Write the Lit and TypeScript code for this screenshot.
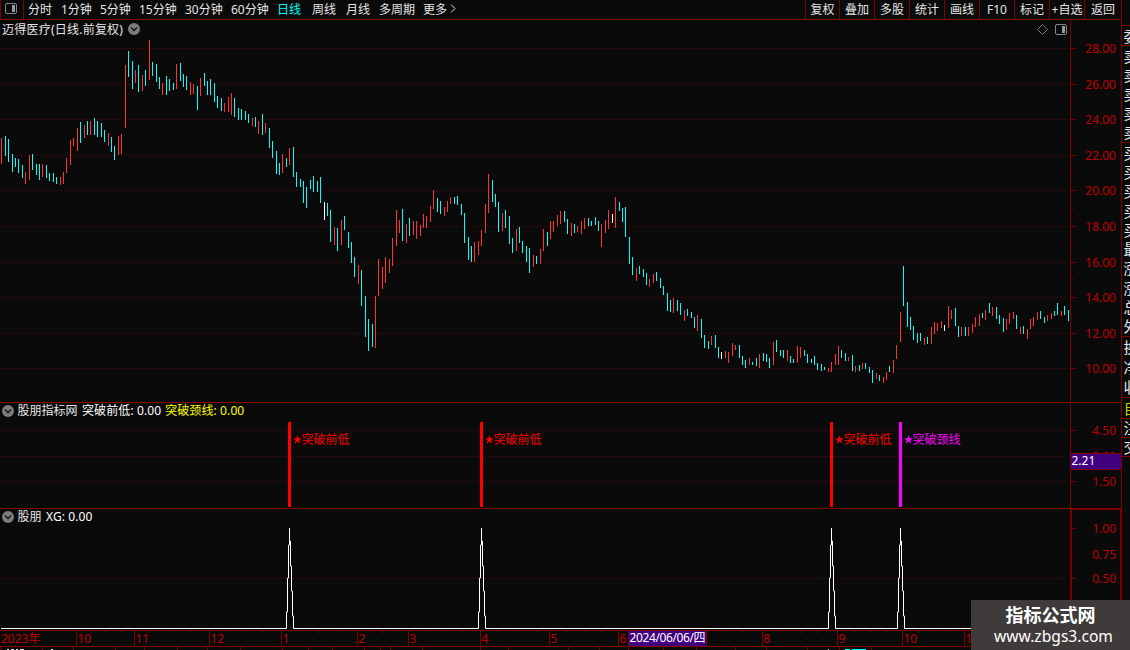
import { LitElement, html, svg, css } from 'lit';
import { customElement } from 'lit/decorators.js';
import { classMap } from 'lit/directives/class-map.js';

// x, high, low, kind (r = rising, c = falling, w = unchanged)
const BARS = `
1 138 164 r,5 136 156 c,8 139 162 c,12 154 172 c,15 158 167 c,18 159 173 c,22 165 178 c,25 172 184 r
29 155 180 r,32 154 170 c,36 164 175 c,39 164 180 c,42 164 177 r,46 165 178 c,49 173 181 c,53 173 182 c
56 177 184 c,60 177 185 r,63 172 184 r,66 158 173 r,70 140 165 r,73 138 146 r,77 128 151 r,80 122 143 c
84 125 138 r,87 121 135 c,90 121 135 r,94 118 135 c,97 121 137 c,101 123 137 c,104 130 142 c,108 133 146 r
111 137 152 c,114 146 160 c,118 136 155 r,121 134 154 r,125 65 128 r,128 51 77 c,132 61 89 c,135 70 83 r
138 65 92 c,142 75 91 r,145 70 86 c,149 40 80 r,152 62 76 c,156 64 82 c,159 77 89 c,162 83 95 r
166 76 95 c,169 79 91 c,173 83 90 c,176 64 89 r,180 63 81 c,183 74 87 c,186 76 90 c,190 82 95 r
193 84 94 r,197 86 110 c,200 78 96 r,204 73 86 c,207 81 95 c,210 79 95 c,214 83 102 c,217 96 108 c
221 98 111 c,224 103 112 r,228 97 112 r,231 93 115 r,234 98 117 c,238 108 120 c,241 109 120 c,245 111 120 c
248 114 123 c,252 118 126 r,255 117 127 c,258 121 134 r,262 114 135 c,265 123 133 r,269 128 148 c,272 141 158 c
276 151 174 c,279 163 175 c,282 154 173 r,286 158 167 c,289 148 165 r,293 147 177 c,296 172 187 c,300 179 187 c
303 181 203 c,306 187 208 c,310 180 189 c,313 176 192 c,317 181 192 c,320 177 203 c,324 202 220 w,327 203 216 c
330 210 242 c,334 227 245 r,337 228 251 c,341 220 245 r,344 216 230 c,348 232 248 c,351 242 263 c,354 257 277 c
358 265 284 r,361 270 306 c,365 296 337 c,368 319 351 c,372 324 347 c,375 296 348 r,378 259 296 r,382 267 289 r
385 257 283 r,389 259 273 r,392 238 266 r,396 210 246 r,399 220 233 r,402 209 241 c,406 224 243 r,409 218 236 c
413 221 235 r,416 221 239 r,420 225 236 r,423 214 228 r,426 216 228 r,430 206 222 r,433 190 209 r,437 198 212 c
440 201 214 c,444 207 216 r,447 201 212 r,450 197 204 r,454 197 204 c,457 196 205 c,461 204 215 c,464 213 243 c
468 237 260 c,471 246 262 c,474 242 262 r,478 241 255 r,481 230 246 r,485 204 233 r,488 174 213 r,492 180 202 c
495 194 207 c,498 202 232 c,502 213 231 r,505 210 228 c,509 216 244 c,512 238 253 c,516 229 251 r,519 227 243 c
522 241 253 c,526 246 262 c,529 248 273 c,533 255 267 r,536 256 264 c,540 249 264 r,543 229 251 r,547 232 246 c
550 221 239 r,553 221 232 r,557 215 226 r,560 211 224 r,564 211 222 c,567 219 234 c,571 223 236 r,574 224 233 c
577 226 232 r,581 221 234 r,584 218 229 r,588 218 226 c,591 221 226 c,595 217 225 c,598 221 231 c,601 224 247 r
605 220 233 r,608 210 229 r,612 214 223 w,615 197 228 r,619 202 211 c,622 208 222 c,625 207 237 c,629 237 264 c
632 257 275 c,636 268 281 r,639 266 274 c,643 269 277 c,646 273 285 c,649 279 287 r,653 274 283 r,656 272 281 c
660 278 288 c,663 286 295 c,667 293 311 c,670 300 312 c,673 298 313 r,677 300 311 c,680 303 315 c,684 310 321 r
687 309 316 c,691 312 318 c,694 317 328 c,697 315 331 r,701 319 338 c,704 335 348 c,708 341 349 c,711 336 345 r
715 335 348 c,718 347 358 c,721 352 359 w,725 351 358 r,728 352 363 r,732 343 356 r,735 345 350 r,739 345 358 c
742 356 365 c,745 360 368 c,749 358 365 r,752 362 365 c,756 358 366 c,759 354 368 r,763 353 361 c,766 354 362 c
769 358 368 c,773 342 365 r,776 340 352 c,780 350 356 c,783 350 358 c,787 350 361 r,790 356 363 c,793 359 363 c
797 346 363 r,800 347 358 r,804 350 356 c,807 354 363 c,811 359 363 c,814 356 365 c,817 363 370 c,821 364 371 c
824 367 370 c,828 368 372 r,831 362 372 r,835 354 365 r,838 346 365 r,841 350 358 c,845 353 361 c,848 357 361 r
852 355 371 c,855 366 372 r,859 365 371 c,862 363 369 r,865 363 369 c,869 367 373 c,872 370 383 c,876 373 379 r
879 375 381 c,883 377 383 r,886 372 380 r,889 366 372 c,893 360 373 r,896 345 359 r,900 312 342 r,903 266 306 c
907 302 327 c,910 317 330 c,913 326 340 c,917 333 343 c,920 333 341 c,924 338 345 r,927 337 344 c,931 327 344 r
934 322 334 r,937 323 331 r,941 321 328 r,944 325 331 w,948 306 328 r,951 310 319 r,955 308 326 c,958 326 337 c
961 327 336 r,965 327 336 c,968 327 336 r,972 324 333 r,975 317 327 r,979 314 326 r,982 313 318 c,985 310 320 r
989 303 313 c,992 307 316 r,996 307 319 c,999 315 324 c,1003 318 332 c,1006 319 330 r,1009 313 324 r,1013 312 319 r
1016 315 329 c,1020 327 334 r,1023 326 334 c,1027 329 339 r,1030 319 329 r,1033 317 326 r,1037 312 320 r,1040 311 319 c
1044 317 323 c,1047 315 321 r,1051 313 319 r,1054 311 316 c,1057 303 315 c,1061 311 316 r,1064 306 315 c,1068 310 321 c`;

interface Bar {
  x: number;
  high: number;
  low: number;
  kind: string;
}

const bars: Bar[] = BARS.trim()
  .split(/[\n,]/)
  .map((row) => {
    const [x, high, low, kind] = row.split(' ');
    return { x: +x, high: +high, low: +low, kind };
  });

const PERIODS = ['分时', '1分钟', '5分钟', '15分钟', '30分钟', '60分钟', '日线', '周线', '月线', '多周期', '更多'];
const TOOLS = ['复权', '叠加', '多股', '统计', '画线', 'F10', '标记', '+自选', '返回'];

const PRICES: [string, number][] = [
  ['28.00', 48], ['26.00', 84], ['24.00', 119], ['22.00', 155], ['20.00', 190],
  ['18.00', 226], ['16.00', 262], ['14.00', 297], ['12.00', 333], ['10.00', 368],
];

const SIGNALS = [
  { x: 289, label: '突破前低', kind: 'low' },
  { x: 481, label: '突破前低', kind: 'low' },
  { x: 831, label: '突破前低', kind: 'low' },
  { x: 900, label: '突破颈线', kind: 'neck' },
];

const MONTHS: [string, number][] = [
  ['10', 76], ['11', 134], ['12', 209], ['1', 281], ['2', 357], ['3', 408], ['4', 480],
  ['5', 549], ['6', 618], ['8', 762], ['9', 837], ['10', 902], ['11', 964],
];
const WEEKS = [
  91, 105, 120, 149, 172, 190, 227, 244, 263, 300, 319, 338, 370, 382, 395, 426, 444, 462, 497, 515,
  536, 566, 584, 601, 723, 742, 781, 800, 816, 854, 870, 886, 918, 933, 949,
];
const FOOT_TICKS = [
  0, 42, 73, 115, 144, 177, 207, 240, 282, 308, 332, 364, 380, 390, 422, 480, 508, 568, 599, 628, 663,
  696, 735, 766, 807, 839, 871,
];

const QUOTE_GROUPS = [
  { rows: ['委'], size: 20 },
  { rows: ['卖', '卖', '卖', '卖', '卖'], size: 97 },
  { rows: ['买', '买', '买', '买', '买', '最', '涨', '涨', '总', '外'], size: 194 },
  { rows: ['换', '净', '收'], size: 61 },
  { rows: ['自'], size: 21, kind: 'own' },
  { rows: ['注'], size: 19 },
  { rows: ['交'], size: 20 },
];

const dots = (y: number) => svg`<line class="grid" x1="1" x2="1067" y1=${y + 0.5} y2=${y + 0.5}></line>`;
const tick = (y: number, len: number) => svg`<rect class="rule" x="1071" y=${y} width=${len} height="1"></rect>`;
const scale = (text: string, y: number) => svg`
  <text class="scale" x="1116" y=${y + 5} text-anchor="end">${text}</text>`;

@customElement('round-toggle')
export class RoundToggle extends LitElement {
  static styles = css`
    :host {
      display: block;
      width: 12px;
      height: 12px;
    }
    svg {
      display: block;
    }
  `;

  render() {
    return html`
      <svg width="12" height="12" viewBox="0 0 12 12">
        <circle cx="6" cy="6" r="6" fill="#7c7c7c"></circle>
        <path d="M3 4.5 6 7.5 9 4.5" fill="none" stroke="#111" stroke-width="1.3"></path>
      </svg>
    `;
  }
}

@customElement('dock-icon')
export class DockIcon extends LitElement {
  static styles = css`
    :host {
      display: block;
      width: 12px;
      height: 12px;
    }
    svg {
      display: block;
    }
  `;

  render() {
    return html`
      <svg width="12" height="12" viewBox="0 0 12 12">
        <rect x="0.5" y="0.5" width="11" height="10" rx="1.5" fill="none" stroke="#858585"></rect>
        <rect x="7" y="2" width="3" height="7" fill="#999"></rect>
      </svg>
    `;
  }
}

@customElement('app-root')
export class AppRoot extends LitElement {
  static styles = css`
    :host {
      display: flex;
      position: relative;
      width: 1130px;
      height: 650px;
      overflow: hidden;
      background: #0a0a0a;
      color: #e6e6e6;
      font: 12px/14px 'Noto Sans', 'Noto Sans CJK SC', sans-serif;
      white-space: nowrap;
    }
    svg {
      display: block;
    }
    .main {
      display: flex;
      flex-direction: column;
      width: 1121px;
      flex: none;
    }
    .toolbar {
      display: flex;
      height: 19px;
      border-bottom: 1px solid #800000;
      line-height: 19px;
    }
    .dock {
      box-sizing: border-box;
      width: 24px;
      padding: 3px 0 0 4px;
      border: solid #800000;
      border-width: 0 1px;
    }
    .dock dock-icon {
      width: 12px;
    }
    .periods {
      display: grid;
      grid-template-columns: 33px 39px 39px 46px 46px 46px 35px 34px 33px 44px 27px 8px;
      padding-left: 4px;
    }
    .active {
      color: #00ffff;
    }
    .more {
      padding-top: 4px;
    }
    .tools {
      display: grid;
      grid-template-columns: 34px repeat(7, 35px) 37px;
      margin-left: auto;
    }
    .tools span {
      border-left: 1px solid #800000;
      text-align: center;
    }
    .panel {
      display: grid;
    }
    .panel > * {
      grid-area: 1 / 1;
    }
    .title {
      display: flex;
      align-items: flex-start;
      z-index: 1;
    }
    .title round-toggle {
      margin: 1px 3.5px 0 2px;
    }
    .title .name {
      margin-right: 4.5px;
    }
    .title .value {
      color: #fff;
      margin-right: 4px;
      letter-spacing: 0.1px;
    }
    .title .value.neck {
      color: #ffff00;
    }
    .price .title {
      padding: 3px 54px 0 2px;
    }
    .price .title .stock {
      letter-spacing: 0.23px;
    }
    .price .title round-toggle {
      margin: 0 auto 0 5px;
    }
    .price .title dock-icon {
      margin: 1px 0 0 7px;
    }
    .signal .title,
    .pick .title {
      padding-top: 1px;
    }
    .grid {
      stroke: #780808;
      stroke-dasharray: 1 3;
    }
    .rule {
      fill: #800000;
    }
    .scale {
      fill: #c00000;
      font-size: 12px;
    }
    .bar-r {
      fill: #ff3232;
    }
    .bar-c {
      fill: #00ffff;
    }
    .bar-w {
      fill: #fff;
    }
    .low {
      fill: #ff0000;
    }
    .neck {
      fill: #ff00ff;
    }
    .cursor {
      fill: #400080;
    }
    .cursor-text {
      fill: #fff;
    }
    .curve {
      fill: none;
      stroke: #fff;
    }
    .quotes {
      width: 8px;
      overflow: hidden;
      border-left: 1px solid #800000;
      height: 600px;
      font-size: 15px;
    }
    .quotes .group {
      box-sizing: border-box;
      display: flex;
      flex-direction: column;
      justify-content: space-around;
      border-top: 1px solid #800000;
      padding-left: 1.5px;
    }
    .quotes .group:first-child {
      margin-top: 25px;
    }
    .quotes .group:last-child {
      border-bottom: 1px solid #800000;
    }
    .quotes .own {
      color: #c8c800;
    }
    .watermark {
      position: absolute;
      right: 0;
      bottom: 0;
      width: 159px;
      height: 50px;
      background: #403b3b;
      color: #fff;
      text-align: center;
      box-sizing: border-box;
      padding-top: 5px;
    }
    .watermark .site {
      font-size: 18px;
      font-weight: bold;
      line-height: 21px;
    }
    .watermark .url {
      font-size: 15.6px;
      line-height: 20px;
      padding-left: 6px;
    }
  `;

  render() {
    return html`
      <div class="main">
        ${this.renderToolbar()} ${this.renderPrice()} ${this.renderSignal()} ${this.renderPick()}
        ${this.renderTimeline()}
      </div>
      <div class="quotes">
        ${QUOTE_GROUPS.map(
          (g) => html`
            <div class=${classMap({ group: true, own: g.kind === 'own' })} style="height:${g.size}px">
              ${g.rows.map((r) => html`<span>${r}</span>`)}
            </div>
          `
        )}
      </div>
      <div class="watermark">
        <div class="site">指标公式网</div>
        <div class="url">www.zbgs3.com</div>
      </div>
    `;
  }

  private renderToolbar() {
    return html`
      <div class="toolbar">
        <div class="dock"><dock-icon></dock-icon></div>
        <div class="periods">
          ${PERIODS.map((p) => html`<span class=${classMap({ active: p === '日线' })}>${p}</span>`)}
          <svg class="more" width="7" height="10" viewBox="0 0 7 10">
            <path d="M1 .5 5 4.5 1 8.5" fill="none" stroke="#ddd"></path>
          </svg>
        </div>
        <div class="tools">${TOOLS.map((t) => html`<span>${t}</span>`)}</div>
      </div>
    `;
  }

  private renderPrice() {
    return html`
      <div class="panel price">
        <div class="title">
          <span class="stock">迈得医疗(日线.前复权)</span>
          <round-toggle></round-toggle>
          <svg width="11" height="12" viewBox="0 0 11 12">
            <path d="M5.5 1.5 10.5 6.5 5.5 11.5 .5 6.5Z" fill="none" stroke="#777"></path>
          </svg>
          <dock-icon></dock-icon>
        </div>
        <svg width="1121" height="383" viewBox="0 20 1121 383">
          ${PRICES.map(([text, y]) => svg`${dots(y)}${tick(y, 5)}${scale(text, y)}`)}
          ${PRICES.slice(0, -1).map(([, y], i) => tick(Math.floor((y + PRICES[i + 1][1]) / 2), 2))}
          ${bars.map(
            (b) => svg`<rect class="bar-${b.kind}" x=${b.x} y=${b.high} width="1" height=${b.low - b.high}></rect>`
          )}
          <rect class="rule" x="1070" y="20" width="1" height="383"></rect>
          <rect class="rule" x="0" y="402" width="1121" height="1"></rect>
        </svg>
      </div>
    `;
  }

  private renderSignal() {
    return html`
      <div class="panel signal">
        <div class="title">
          <round-toggle></round-toggle>
          <span class="name">股朋指标网</span>
          <span class="value">突破前低: 0.00</span>
          <span class="value neck">突破颈线: 0.00</span>
        </div>
        <svg width="1121" height="106" viewBox="0 403 1121 106">
          ${[430, 456, 481].map(dots)} ${tick(430, 5)} ${tick(443, 2)} ${tick(481, 5)}
          ${scale('4.50', 430)} ${scale('3.00', 456)} ${scale('1.50', 481)}
          ${SIGNALS.map(
            (s) => svg`
              <g class=${s.kind}>
                <rect x=${s.x - 1} y="422" width="3" height="85"></rect>
                <path transform="translate(${s.x + 4} 435)"
                  d="M4.5 0 5.6 3.2H9L6.3 5.2 7.4 8.7 4.5 6.6 1.6 8.7 2.7 5.2 0 3.2H3.4Z"></path>
                <text x=${s.x + 12.5} y="444">${s.label}</text>
              </g>
            `
          )}
          <rect class="rule" x="1070" y="403" width="1" height="106"></rect>
          <rect class="rule" x="1070" y="453" width="51" height="17"></rect>
          <rect class="cursor" x="1071" y="454" width="50" height="15"></rect>
          <text class="cursor-text" x="1071.5" y="465">2.21</text>
          <rect class="rule" x="0" y="508" width="1121" height="1"></rect>
        </svg>
      </div>
    `;
  }

  private renderPick() {
    const spikes = SIGNALS.map(
      ({ x }) => `H${x - 2.5}V612H${x - 1.5}V578H${x - 0.5}V545H${x + 0.5}V528V541H${x + 1.5}V566H${x + 2.5}V591H${x + 3.5}V616H${x + 4.5}V628.5`
    ).join('');
    return html`
      <div class="panel pick">
        <div class="title">
          <round-toggle></round-toggle>
          <span class="name">股朋</span>
          <span class="value">XG: 0.00</span>
        </div>
        <svg width="1121" height="121" viewBox="0 509 1121 121">
          ${dots(578)} ${tick(528, 5)} ${tick(553, 2)} ${tick(578, 5)}
          ${scale('1.00', 528)} ${scale('0.75', 554)} ${scale('0.50', 578)}
          <path class="curve" d="M1 628.5${spikes}H1070"></path>
          <rect class="rule" x="1070" y="509" width="2" height="121"></rect>
          <rect class="rule" x="1120" y="509" width="2" height="121"></rect>
          <rect class="rule" x="1070" y="509" width="51" height="1"></rect>
        </svg>
      </div>
    `;
  }

  private renderTimeline() {
    return html`
      <svg width="1121" height="20" viewBox="0 630 1121 20">
        <rect class="rule" x="0" y="630" width="1121" height="1"></rect>
        <rect class="rule" x="0" y="646" width="1121" height="1"></rect>
        <text class="scale" x="1" y="643">2023年</text>
        ${MONTHS.map(
          ([text, x]) => svg`
            <rect class="rule" x=${x} y="631" width="1" height="15"></rect>
            <text class="scale" x=${x + 1.5} y="643">${text}</text>
          `
        )}
        ${WEEKS.map((x) => svg`<rect class="rule" x=${x} y="631" width="1" height="2"></rect>`)}
        ${FOOT_TICKS.map((x) => svg`<rect class="rule" x=${x} y="647" width="1" height="3"></rect>`)}
        <rect class="rule" x="628" y="631" width="79" height="15"></rect>
        <rect class="cursor" x="629" y="631" width="77" height="15"></rect>
        <text class="cursor-text" x="629.5" y="642" textLength="76">2024/06/06/四</text>
        <path d="M7 649.5h2m2 0h3m2 0h2m2 0h4M51 649.5h2M828 649.5h1" stroke="#ddd"></path>
        <path d="M845 649.5h5m2 0h14" stroke="#00ffff"></path>
      </svg>
    `;
  }
}
